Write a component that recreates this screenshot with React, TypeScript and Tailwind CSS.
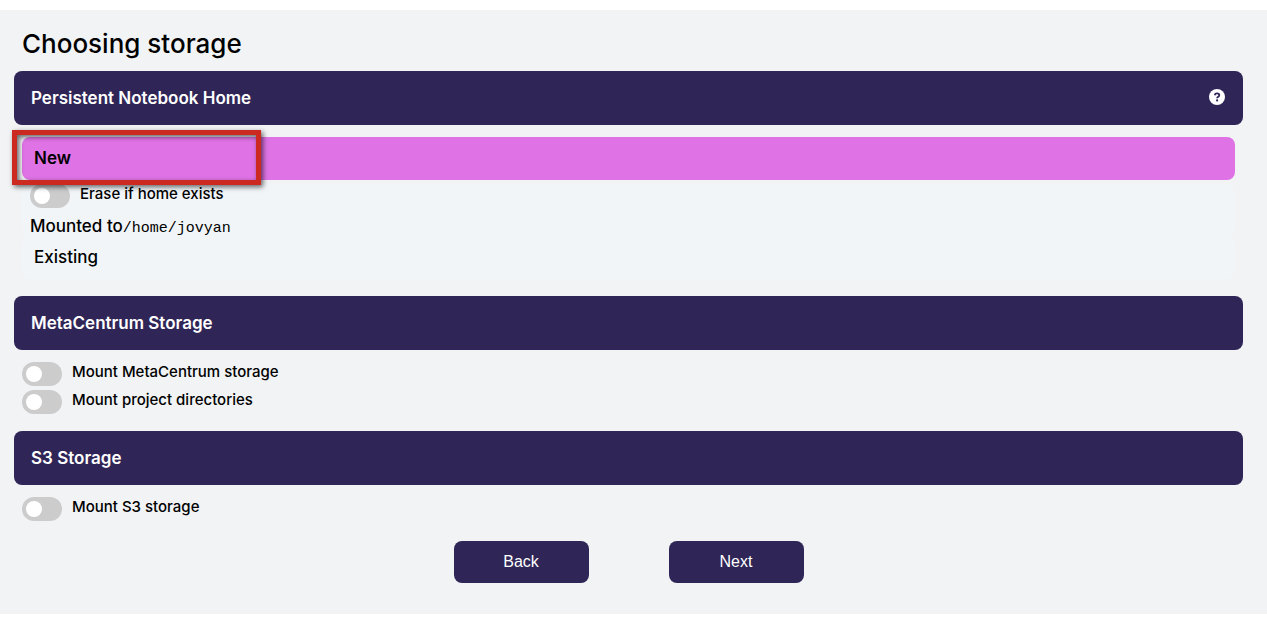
import type { ReactNode } from "react";

function SectionHeader({ title, help }: { title: string; help?: boolean }) {
  return (
    <div className="flex h-[54px] items-center justify-between rounded-lg bg-[#2f2556] pr-[18px] pl-[17px] text-white">
      <h2 className="text-[17px] leading-6 font-semibold">{title}</h2>
      {help && (
        <button type="button" aria-label="Help" className="mb-[2px] size-4">
          <svg viewBox="0 0 16 16" className="size-4" aria-hidden="true">
            <circle cx="8" cy="8" r="8" fill="#fff" />
            <path
              d="M5.700 6.200C6 4.900 6.900 4.400 8 4.400c1.400 0 2.300.7 2.300 1.800 0 1.500-2.200 1.400-2.200 3"
              fill="none"
              stroke="#2f2556"
              strokeWidth="1.800"
            />
            <circle cx="8.100" cy="11.400" r="1.100" fill="#2f2556" />
          </svg>
        </button>
      )}
    </div>
  );
}

function Toggle({ id, children }: { id: string; children: ReactNode }) {
  return (
    <div className="flex items-start gap-[10px]">
      <input
        id={id}
        type="checkbox"
        role="switch"
        className="flex h-6 w-10 shrink-0 appearance-none items-center rounded-full bg-[#cccccc] px-1 before:size-4 before:rounded-full before:bg-white before:content-[''] checked:justify-end checked:bg-[#2f2556]"
      />
      <label htmlFor={id} className="text-[15px] leading-5 font-medium">
        {children}
      </label>
    </div>
  );
}

function NavButton({ children }: { children: ReactNode }) {
  return (
    <button
      type="button"
      className="h-[42px] w-[135px] rounded-lg bg-[#2f2556] font-['Liberation_Sans',sans-serif] text-base text-white"
    >
      {children}
    </button>
  );
}

export default function App() {
  return (
    <div className="bg-white py-[10px] font-['Inter',sans-serif] text-black">
      <main className="bg-[#f1f3f5] pt-4 pr-6 pb-[31px] pl-[14px]">
        <h1 className="pl-2 text-[26px] leading-9 font-medium">Choosing storage</h1>

        <section className="mt-[9px]">
          <SectionHeader title="Persistent Notebook Home" help />
          <div className="mt-3 px-2">
            <div className="relative">
              <button
                type="button"
                className="flex h-[43px] w-full items-center rounded-lg bg-[#df73e5] px-3 text-left text-[17px] font-semibold"
              >
                New
              </button>
              <div className="pointer-events-none absolute -top-[7px] -left-[10px] z-10 h-[55px] w-[249px] border-[5px] border-[#cc2a20] shadow-[2px_2px_5px_rgba(0,0,0,0.6),inset_2px_2px_5px_rgba(0,0,0,0.6)]" />
            </div>
            <div className="mt-1 rounded-lg bg-[#f1f5f8] px-2">
              <Toggle id="erase-home">Erase if home exists</Toggle>
              <p className="mt-2 text-[17px] leading-5 font-medium">
                Mounted to
                <code className="font-['Liberation_Mono',monospace] text-[15px] leading-none font-normal">
                  /home/jovyan
                </code>
              </p>
            </div>
            <button
              type="button"
              className="flex h-[43px] w-full items-center rounded-lg bg-[#f1f5f8] px-3 text-left text-[17px] font-medium"
            >
              Existing
            </button>
          </div>
        </section>

        <section className="mt-[17px]">
          <SectionHeader title="MetaCentrum Storage" />
          <div className="mt-3 flex flex-col gap-1 px-2">
            <Toggle id="mount-metacentrum">Mount MetaCentrum storage</Toggle>
            <Toggle id="mount-projects">Mount project directories</Toggle>
          </div>
        </section>

        <section className="mt-[17px]">
          <SectionHeader title="S3 Storage" />
          <div className="mt-3 px-2">
            <Toggle id="mount-s3">Mount S3 storage</Toggle>
          </div>
        </section>

        <div className="mt-5 flex justify-center gap-20">
          <NavButton>Back</NavButton>
          <NavButton>Next</NavButton>
        </div>
      </main>
    </div>
  );
}
